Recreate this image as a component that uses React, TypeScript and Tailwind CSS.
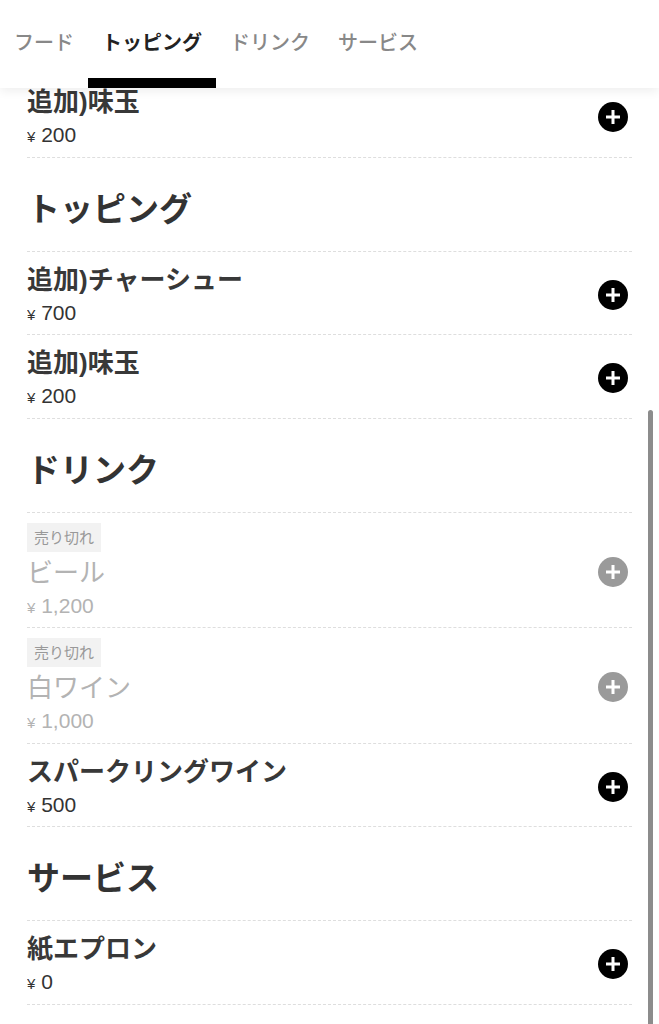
import React from 'react';

type Row =
  | { kind: 'heading'; title: string }
  | { kind: 'item'; name: string; price: string; soldOut?: boolean };

const tabs = ['フード', 'トッピング', 'ドリンク', 'サービス'];

const rows: Row[] = [
  { kind: 'item', name: '追加)味玉', price: '200' },
  { kind: 'heading', title: 'トッピング' },
  { kind: 'item', name: '追加)チャーシュー', price: '700' },
  { kind: 'item', name: '追加)味玉', price: '200' },
  { kind: 'heading', title: 'ドリンク' },
  { kind: 'item', name: 'ビール', price: '1,200', soldOut: true },
  { kind: 'item', name: '白ワイン', price: '1,000', soldOut: true },
  { kind: 'item', name: 'スパークリングワイン', price: '500' },
  { kind: 'heading', title: 'サービス' },
  { kind: 'item', name: '紙エプロン', price: '0' },
];

const PlusButton: React.FC<{ disabled?: boolean }> = ({ disabled }) => (
  <svg width="30" height="30" viewBox="0 0 30 30" className="shrink-0 mr-[4px]">
    <circle cx="15" cy="15" r="15" fill={disabled ? '#9a9a9a' : '#000'} />
    <path d="M15 8v14M8 15h14" stroke="#fff" strokeWidth="3" strokeLinecap="butt" />
  </svg>
);

export default function App() {
  return (
    <div
      className="relative h-[1024px] overflow-hidden bg-white text-[#333]"
      style={{ fontFamily: '"Liberation Sans", "Noto Sans CJK JP", sans-serif' }}
    >
      {/* Tab header */}
      <div className="absolute top-0 inset-x-0 z-10 h-[88px] bg-white shadow-[0_3px_10px_rgba(0,0,0,0.07)]">
        <div className="flex h-full">
          {tabs.map((t, i) => (
            <div key={t} className="flex flex-col h-full px-[14px]">
              <span
                className={`mt-[29px] h-[28px] overflow-hidden text-[20px] leading-[28px] whitespace-nowrap ${
                  i === 1 ? 'font-bold text-[#222]' : 'font-medium text-[#888]'
                }`}
              >
                {t}
              </span>
              {i === 1 && <div className="mt-auto -mx-[14px] h-[10px] bg-black" />}
            </div>
          ))}
        </div>
      </div>

      {/* Menu list */}
      <div className="pt-[74px] px-[27px]">
        {rows.map((r, idx) =>
          r.kind === 'heading' ? (
            <div key={idx} className="border-b border-dashed border-[#dedede] pt-[29px] pb-[18px]">
              <h2 className="h-[46px] overflow-hidden text-[33px] leading-[46px] font-bold text-[#333]">{r.title}</h2>
            </div>
          ) : (
            <div
              key={idx}
              className="flex items-center justify-between border-b border-dashed border-[#dedede] pt-[10px] pb-[6.5px]"
            >
              <div className="flex flex-col items-start">
                {r.soldOut && (
                  <span className="mb-[3px] h-[29px] overflow-hidden px-[7px] bg-[#f2f2f2] text-[15px] leading-[29px] text-[#999]">
                    売り切れ
                  </span>
                )}
                <span
                  className={`h-[36px] overflow-hidden text-[26px] leading-[36px] whitespace-nowrap ${
                    r.soldOut ? 'font-normal text-[#b3b3b3]' : 'font-bold text-[#383838]'
                  }`}
                >
                  {r.name}
                </span>
                <span
                  className={`h-[30px] overflow-hidden text-[21px] leading-[30px] ${
                    r.soldOut ? 'text-[#b3b3b3]' : 'text-[#333]'
                  }`}
                >
                  <span className="text-[15px]">¥</span> {r.price}
                </span>
              </div>
              <PlusButton disabled={r.soldOut} />
            </div>
          )
        )}
      </div>

      {/* Overlay scrollbar */}
      <div className="absolute right-[6px] top-[410px] -bottom-[10px] w-[5px] rounded-full bg-[#8c8c8c]" />
    </div>
  );
}
